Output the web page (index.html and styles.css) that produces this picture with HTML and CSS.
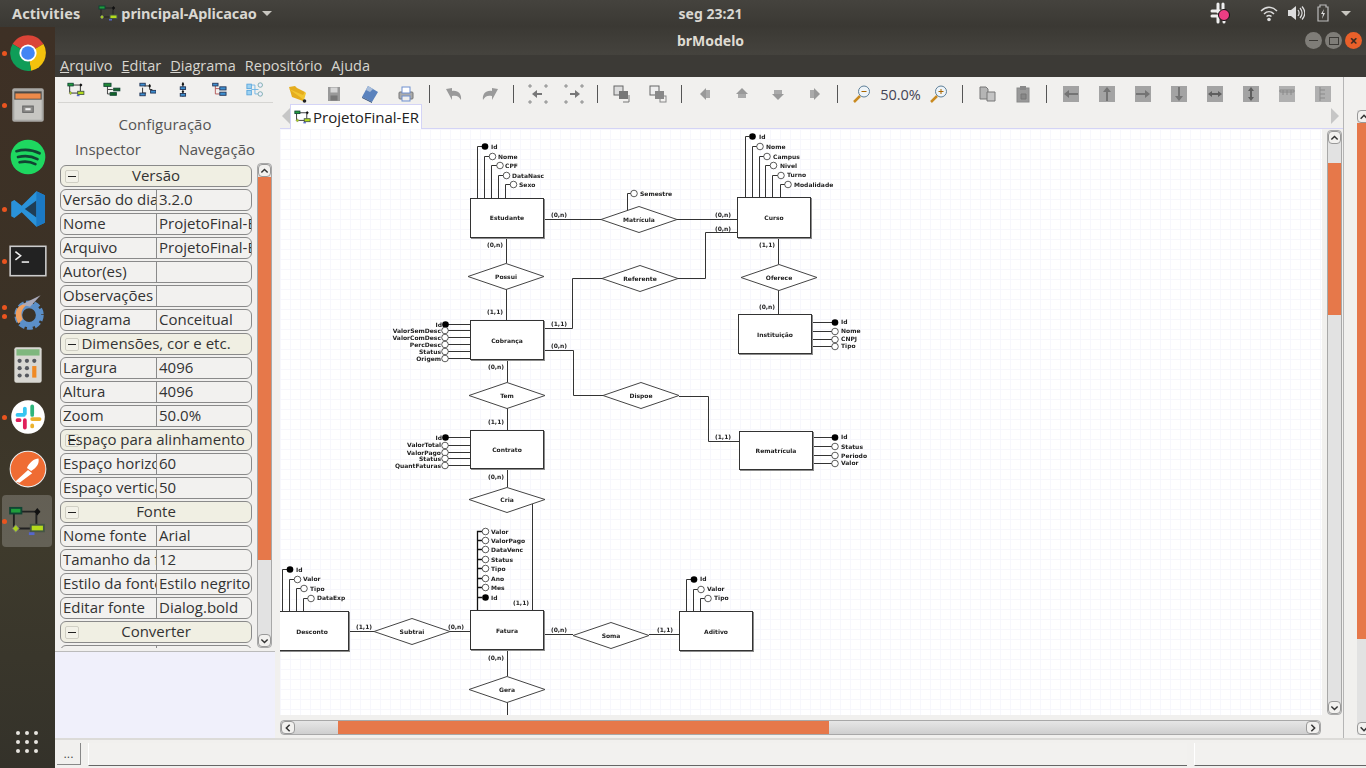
FILE: index.html
```html
<!DOCTYPE html>
<html>
<head>
	<meta charset="utf-8">
	<title>brModelo</title>
	<link rel="stylesheet" href="styles.css">
</head>
<body>
	<!-- shared icons -->
	<svg class="defs">
		<symbol id="i-er" viewBox="0 0 20 16">
			<path d="M5 3H17M3 4V12M4 12H13M15 4V10" fill="none" stroke="#222" stroke-width="1"/>
			<rect x="1" y="1" width="6" height="3" fill="#1f9e3c" stroke="#143"/>
			<path d="M15.5 1l1.600 2-1.600 2-1.600-2z" fill="#111"/>
			<rect x="12" y="10" width="7" height="3.5" fill="#b5dc1c" stroke="#454"/>
			<path d="M4 10l1.800 2-1.800 2-1.800-2z" fill="#a9d020" stroke="#777" stroke-width=".5"/>
			<rect x="11" y="14" width="3" height="1.5" fill="#5566cc"/>
		</symbol>
		<symbol id="i-tree" viewBox="0 0 20 16">
			<path d="M5 4V8H11M5 8V13H8" fill="none" stroke="#333"/>
			<rect x="1" y="1" width="8" height="3.5" fill="#1f8a35" stroke="#143"/>
			<rect x="12" y="6.5" width="7" height="3" fill="#126628" stroke="#143"/>
			<rect x="8" y="11.5" width="7" height="3" fill="#126628" stroke="#143"/>
		</symbol>
		<symbol id="i-net" viewBox="0 0 20 16">
			<path d="M6 4H12M12 2V8M4 6V12H8M12 8H15" fill="none" stroke="#222"/>
			<rect x="1" y="1" width="6" height="3" fill="#3d8fd0" stroke="#235"/>
			<rect x="13" y="9" width="6" height="3" fill="#3d8fd0" stroke="#235"/>
			<rect x="1" y="12" width="6" height="3" fill="#3d8fd0" stroke="#235"/>
			<path d="M12 2l1.5 2-1.5 2-1.5-2z" fill="#111"/>
		</symbol>
		<symbol id="i-vert" viewBox="0 0 20 16">
			<path d="M10 0V16" stroke="#222"/>
			<path d="M10 0l1.5 2-1.5 2-1.5-2z" fill="#111"/>
			<rect x="7" y="5" width="6" height="3" fill="#3d8fd0" stroke="#235"/>
			<path d="M10 9l1.5 1.5-1.5 1.5-1.5-1.5z" fill="#111"/>
			<rect x="7" y="12.5" width="6" height="3" fill="#3d8fd0" stroke="#235"/>
		</symbol>
		<symbol id="i-rel" viewBox="0 0 20 16">
			<path d="M6 4V13H11M6 7H11" fill="none" stroke="#b05050"/>
			<rect x="3" y="1" width="6" height="3" fill="#3d8fd0" stroke="#235"/>
			<rect x="11" y="5" width="7" height="3.5" fill="#3d8fd0" stroke="#235"/>
			<rect x="11" y="11" width="7" height="3.5" fill="#3d8fd0" stroke="#235"/>
		</symbol>
		<symbol id="i-map" viewBox="0 0 20 16">
			<path d="M6 3H10V13H14M6 8H14" fill="none" stroke="#6cb4e4"/>
			<rect x="1" y="2" width="5" height="5" fill="#9ed2f2" stroke="#5aa6dc"/>
			<rect x="1" y="9" width="5" height="5" fill="#9ed2f2" stroke="#5aa6dc"/>
			<circle cx="16" cy="3" r="2.5" fill="#eef" stroke="#7aa"/>
			<circle cx="16" cy="13" r="2.5" fill="#eef" stroke="#7aa"/>
		</symbol>
		<symbol id="i-open" viewBox="0 0 20 20">
			<path d="M1 3l6-1 2 2 8 4-2 9L4 13z" fill="#e5ad1e"/>
			<path d="M1 5l14 6 2-3 1 1-2 7z" fill="#f2c630"/>
			<circle cx="16.5" cy="17" r="1.800" fill="#222"/>
		</symbol>
		<symbol id="i-save" viewBox="0 0 20 20">
			<path d="M4 3H16V17H4z" fill="#999"/>
			<rect x="6.5" y="3.5" width="7" height="5" fill="#d6d6d6"/>
			<rect x="6.5" y="11.5" width="7" height="5" fill="#777"/>
		</symbol>
		<symbol id="i-saveas" viewBox="0 0 20 20">
			<path d="M8 2l10 6-6 10-10-5z" fill="#5a82bd"/>
			<path d="M8 2l5 3-3 3-4-2z" fill="#a9bedb"/>
			<path d="M2 13l10 5v1L2 14z" fill="#33507d"/>
		</symbol>
		<symbol id="i-print" viewBox="0 0 20 20">
			<rect x="3" y="8" width="14" height="7" rx="1" fill="#aaa" stroke="#777"/>
			<rect x="6" y="3" width="8" height="6" fill="#fff" stroke="#6f8fd0"/>
			<rect x="6" y="12" width="8" height="5" fill="#eee" stroke="#6f8fd0"/>
		</symbol>
		<symbol id="i-undo" viewBox="0 0 20 20">
			<path d="M2 5L8 16V12C12 11 15 12 17 16 18 10 14 6 8 7V4z" fill="#9a9a9a"/>
		</symbol>
		<symbol id="i-redo" viewBox="0 0 20 20">
			<path d="M18 5L12 16V12C8 11 5 12 3 16 2 10 6 6 12 7V4z" fill="#9a9a9a"/>
		</symbol>
		<symbol id="i-dots" viewBox="0 0 20 20">
			<path d="M1 1h2v2H1zM17 1h2v2h-2zM1 17h2v2H1zM17 17h2v2h-2z" fill="none" stroke="#777" stroke-width=".8"/>
		</symbol>
		<symbol id="i-front" viewBox="0 0 20 20">
			<rect x="2" y="2" width="9" height="9" fill="#ddd" stroke="#666"/>
			<rect x="7" y="7" width="9" height="8" fill="#777"/>
			<path d="M17 11v7h-6" fill="none" stroke="#777"/>
		</symbol>
		<symbol id="i-back" viewBox="0 0 20 20">
			<rect x="2" y="2" width="9" height="9" fill="#eee" stroke="#666"/>
			<rect x="7" y="7" width="9" height="8" fill="#888"/>
			<rect x="12" y="12" width="6" height="6" fill="none" stroke="#888"/>
		</symbol>
		<symbol id="i-left" viewBox="0 0 20 20">
			<path d="M4 10l6-6v12z" fill="#999"/><rect x="10" y="6" width="4" height="8" fill="#aaa"/>
		</symbol>
		<symbol id="i-up" viewBox="0 0 20 20">
			<path d="M10 4l6 6H4z" fill="#999"/><rect x="6" y="10" width="8" height="4" fill="#aaa"/>
		</symbol>
		<symbol id="i-down" viewBox="0 0 20 20">
			<path d="M10 16l-6-6h12z" fill="#999"/><rect x="6" y="6" width="8" height="4" fill="#aaa"/>
		</symbol>
		<symbol id="i-right" viewBox="0 0 20 20">
			<path d="M16 10l-6-6v12z" fill="#999"/><rect x="6" y="6" width="4" height="8" fill="#aaa"/>
		</symbol>
		<symbol id="i-zoomout" viewBox="0 0 20 20">
			<circle cx="12" cy="7.5" r="5.5" fill="#eef4f8" stroke="#5d7f99"/>
			<path d="M2 18l6-6" stroke="#c98a20" stroke-width="2.5"/>
			<path d="M9.5 7.5h5" stroke="#a60" stroke-width="1"/>
		</symbol>
		<symbol id="i-zoomin" viewBox="0 0 20 20">
			<circle cx="12" cy="7.5" r="5.5" fill="#eef4f8" stroke="#5d7f99"/>
			<path d="M2 18l6-6" stroke="#c98a20" stroke-width="2.5"/>
			<path d="M9.5 7.5h5M12 5v5" stroke="#a60" stroke-width="1"/>
		</symbol>
		<symbol id="i-copy" viewBox="0 0 20 20">
			<path d="M3 3H9L11 5V15H3z" fill="#b5b5b5" stroke="#777"/>
			<path d="M10 8H18V17H10z" fill="#c4c4c4" stroke="#777"/>
		</symbol>
		<symbol id="i-paste" viewBox="0 0 20 20">
			<rect x="4" y="4" width="12" height="14" fill="#999" stroke="#8a8a8a"/>
			<rect x="7" y="2" width="6" height="4" fill="#888"/>
			<path d="M8 10h5v5H8z" fill="#888" stroke="#777"/>
		</symbol>
		<symbol id="i-al1" viewBox="0 0 20 20">
			<path d="M2 2H18V18H2z" fill="#a3a3a3"/>
			<path d="M3 10l5-4v3h9v2H8v3z" fill="#747474"/>
		</symbol>
		<symbol id="i-al2" viewBox="0 0 20 20">
			<path d="M2 2H18V18H2z" fill="#a3a3a3"/>
			<path d="M10 3l4 5h-3v9H9V8H6z" fill="#747474"/>
		</symbol>
		<symbol id="i-al3" viewBox="0 0 20 20">
			<path d="M2 2H18V18H2z" fill="#a3a3a3"/>
			<path d="M17 10l-5-4v3H3v2h9v3z" fill="#747474"/>
		</symbol>
		<symbol id="i-al4" viewBox="0 0 20 20">
			<path d="M2 2H18V18H2z" fill="#a3a3a3"/>
			<path d="M10 17l4-5h-3V3H9v9H6z" fill="#747474"/>
		</symbol>
		<symbol id="i-al5" viewBox="0 0 20 20">
			<path d="M2 2H18V18H2z" fill="#a3a3a3"/>
			<path d="M3 10l4-3v2h6V7l4 3-4 3v-2H7v2z" fill="#5e5e5e"/>
		</symbol>
		<symbol id="i-al6" viewBox="0 0 20 20">
			<path d="M2 2H18V18H2z" fill="#a3a3a3"/>
			<path d="M10 3l3 4h-2v6h2l-3 4-3-4h2V7H7z" fill="#5e5e5e"/>
		</symbol>
		<symbol id="i-al7" viewBox="0 0 20 20">
			<path d="M2 2H18V18H2z" fill="#b0b0b0"/>
			<path d="M3 6h14v2H3zM6 6v5M10 6v5M14 6v5" fill="none" stroke="#8a8a8a"/>
		</symbol>
		<symbol id="i-al8" viewBox="0 0 20 20">
			<path d="M2 2H18V18H2z" fill="#b0b0b0"/>
			<path d="M7 3v14M7 6h5M7 10h5M7 14h5" fill="none" stroke="#8a8a8a"/>
		</symbol>
		<symbol id="i-chev-up" viewBox="0 0 14 12"><path d="M3 8l4-4 4 4" fill="none" stroke="#333" stroke-width="1.800"/></symbol>
		<symbol id="i-chev-down" viewBox="0 0 14 12"><path d="M3 4l4 4 4-4" fill="none" stroke="#333" stroke-width="1.800"/></symbol>
		<symbol id="i-chev-left" viewBox="0 0 14 12"><path d="M9 2L5 6l4 4" fill="none" stroke="#333" stroke-width="1.800"/></symbol>
		<symbol id="i-chev-right" viewBox="0 0 14 12"><path d="M5 2l4 4-4 4" fill="none" stroke="#333" stroke-width="1.800"/></symbol>
	</svg>

	<header class="topbar">
		<span class="activities">Activities</span>
		<span class="app-menu">
			<svg class="app-icon"><use href="#i-er"/></svg>
			principal-Aplicacao
			<span class="caret"></span>
		</span>
		<span class="clock">seg 23:21</span>
		<span class="tray">
			<svg class="tray-slack" viewBox="0 0 22 22">
				<path d="M8 2v8M13 2v6M2 9h8M2 14h7M8 14v6M14 16v4" stroke="#eee" stroke-width="3" stroke-linecap="round"/>
				<circle cx="14" cy="13" r="5.5" fill="#ec3d83" stroke="#111" stroke-width="1"/>
			</svg>
			<svg class="tray-icon" viewBox="0 0 18 18">
				<path d="M1 7c5-5 11-5 16 0M4 10c3-3 7-3 10 0M6.5 12.5c1.5-1.300 3.5-1.300 5 0" fill="none" stroke="#ddd" stroke-width="1.5"/>
				<circle cx="9" cy="15.5" r="1.800" fill="#ddd"/>
			</svg>
			<svg class="tray-icon" viewBox="0 0 18 18">
				<path d="M1 6h3l5-4v14l-5-4H1z" fill="#ddd"/>
				<path d="M11 6c1.5 2 1.5 4 0 6M13 4c2.5 3 2.5 7 0 10M15 2.5c3.5 4 3.5 9 0 13" fill="none" stroke="#ddd" stroke-width="1.200"/>
			</svg>
			<svg class="tray-icon" viewBox="0 0 18 18">
				<path d="M6 1h6v2h2v14H4V3h2z" fill="none" stroke="#bbb" stroke-width="1.200"/>
				<path d="M10 5l-3 5h2l-1 5 3-6H9z" fill="#ddd"/>
			</svg>
			<span class="caret tray-caret"></span>
		</span>
	</header>

	<div class="desktop">
		<nav class="dock">
			<div class="dock-item"><i class="run"></i>
				<svg viewBox="0 0 40 40">
					<path d="M20 20L5.300 11.5A17 17 0 0 1 34.700 11.5z" fill="#db4437"/>
					<path d="M20 20L34.700 11.5A17 17 0 0 1 23 36.800z" fill="#f4c20d"/>
					<path d="M20 20L23 36.800A17 17 0 0 1 5.300 11.5z" fill="#0f9d58"/>
					<circle cx="20" cy="20" r="8.200" fill="#fff"/>
					<circle cx="20" cy="20" r="6.5" fill="#4285f4"/>
				</svg>
			</div>
			<div class="dock-item"><i class="run"></i>
				<svg viewBox="0 0 40 40">
					<rect x="5" y="4" width="30" height="32" rx="2" fill="#a9a8a5"/>
					<rect x="7" y="7" width="26" height="8" fill="#4d4a47"/>
					<rect x="8" y="9" width="24" height="5" fill="#ee8a4a"/>
					<rect x="7" y="15" width="26" height="19" fill="#c7c6c2"/>
					<rect x="15" y="21" width="10" height="6" fill="#8e8d8a" stroke="#666"/>
					<rect x="17.5" y="23" width="5" height="2" fill="#eee"/>
				</svg>
			</div>
			<div class="dock-item">
				<svg viewBox="0 0 40 40">
					<circle cx="20" cy="20" r="16.5" fill="#1ed760"/>
					<path d="M9 14.5c7-2 15-1.5 22 2M10.5 20c6-1.5 13-1 18.5 2M12 25c5-1 10-.8 15 1.800" fill="none" stroke="#143" stroke-width="2.600" stroke-linecap="round"/>
				</svg>
			</div>
			<div class="dock-item"><i class="run"></i>
				<svg viewBox="0 0 40 40">
					<path d="M28 3l8 4v26l-8 4-14-14-7 5.5-3-1.5V13l3-1.5 7 5.5z" fill="#2a92d9"/>
					<path d="M28 12L17 20l11 8z" fill="#1f3d55"/>
					<path d="M28 3l8 4v26l-8 4z" fill="#1b79c4"/>
				</svg>
			</div>
			<div class="dock-item"><i class="run"></i>
				<svg viewBox="0 0 40 40">
					<rect x="3" y="6" width="34" height="28" fill="#222" stroke="#ccc" stroke-width="1.5"/>
					<path d="M8 11l5 4-5 4" fill="none" stroke="#eee" stroke-width="1.5"/>
					<path d="M14 21h7" stroke="#eee" stroke-width="1.5"/>
				</svg>
			</div>
			<div class="dock-item"><i class="run run-a"></i><i class="run run-b"></i>
				<svg viewBox="0 0 40 40">
					<circle cx="21" cy="22" r="11" fill="none" stroke="#5b8fc8" stroke-width="6" stroke-dasharray="5 2"/>
					<circle cx="21" cy="22" r="9" fill="none" stroke="#5b8fc8" stroke-width="5"/>
					<path d="M11 30C5 20 10 10 20 12c-5 2-8 8-5 14z" fill="#f0a060"/>
					<path d="M14 12L32 3 22 14z" fill="#aab"/>
				</svg>
			</div>
			<div class="dock-item">
				<svg viewBox="0 0 40 40">
					<rect x="7" y="3" width="26" height="34" rx="2" fill="#d8d7d2"/>
					<rect x="9" y="5" width="22" height="6" fill="#7fb77e"/>
					<g fill="#55585e">
						<rect x="10" y="14" width="4" height="4" rx="2"/><rect x="17" y="14" width="4" height="4" rx="2"/><rect x="24" y="14" width="4" height="4" rx="2"/>
						<rect x="10" y="21" width="4" height="4" rx="2"/><rect x="17" y="21" width="4" height="4" rx="2"/>
						<rect x="10" y="28" width="4" height="4" rx="2"/><rect x="17" y="28" width="4" height="4" rx="2"/>
					</g>
					<rect x="24" y="21" width="4" height="11" fill="#f08a24"/>
				</svg>
			</div>
			<div class="dock-item"><i class="run"></i>
				<svg viewBox="0 0 40 40">
					<circle cx="20" cy="20" r="16" fill="#fff"/>
					<g stroke-width="3.600" stroke-linecap="round">
						<path d="M17 12v5M10 18h6" stroke="#36c5f0" fill="none"/>
						<path d="M24 10v7M24 18h0" stroke="#2eb67d" fill="none"/>
						<path d="M24 22h7M24 28v1" stroke="#ecb22e" fill="none"/>
						<path d="M17 23v7M10 23h2" stroke="#e01e5a" fill="none"/>
					</g>
				</svg>
			</div>
			<div class="dock-item">
				<svg viewBox="0 0 40 40">
					<circle cx="20" cy="20" r="17" fill="#ef6c33" stroke="#eee" stroke-width="1"/>
					<path d="M8 32l12-11 4 3-12 9zM19 19c2-5 7-9 11-9 1 5-2 9-7 12z" fill="#fff"/>
				</svg>
			</div>
			<div class="dock-item dock-active"><i class="run"></i>
				<svg class="dock-er"><use href="#i-er"/></svg>
			</div>
			<div class="dock-apps">
				<span></span><span></span><span></span><span></span><span></span><span></span><span></span><span></span><span></span>
			</div>
		</nav>

		<div class="window">
			<div class="titlebar">
				<span>brModelo</span>
				<div class="win-btns">
					<span class="win-btn"><b class="w-min"></b></span>
					<span class="win-btn"><b class="w-max"></b></span>
					<span class="win-btn win-close">×</span>
				</div>
			</div>
			<div class="menubar">
				<span><u>A</u>rquivo</span>
				<span><u>E</u>ditar</span>
				<span><u>D</u>iagrama</span>
				<span>Repositório</span>
				<span>Ajuda</span>
			</div>

			<div class="content">
				<aside class="side">
					<div class="side-tools">
						<svg><use href="#i-er"/></svg>
						<svg><use href="#i-tree"/></svg>
						<svg><use href="#i-net"/></svg>
						<svg><use href="#i-vert"/></svg>
						<svg><use href="#i-rel"/></svg>
						<svg><use href="#i-map"/></svg>
					</div>
					<div class="side-title">Configuração</div>
					<div class="side-tabs"><span>Inspector</span><span>Navegação</span></div>
					<div class="inspector">
						<div class="props">
							<div class="row head"><i class="minus"></i>Versão</div>
							<div class="row"><span class="key">Versão do diagrama</span><span class="val">3.2.0</span></div>
							<div class="row"><span class="key">Nome</span><span class="val">ProjetoFinal-ER</span></div>
							<div class="row"><span class="key">Arquivo</span><span class="val">ProjetoFinal-ER</span></div>
							<div class="row"><span class="key">Autor(es)</span><span class="val"></span></div>
							<div class="row"><span class="key">Observações</span><span class="val"></span></div>
							<div class="row"><span class="key">Diagrama</span><span class="val">Conceitual</span></div>
							<div class="row head"><i class="minus"></i>Dimensões, cor e etc.</div>
							<div class="row"><span class="key">Largura</span><span class="val">4096</span></div>
							<div class="row"><span class="key">Altura</span><span class="val">4096</span></div>
							<div class="row"><span class="key">Zoom</span><span class="val">50.0%</span></div>
							<div class="row head"><i class="minus"></i>Espaço para alinhamento</div>
							<div class="row"><span class="key">Espaço horizontal</span><span class="val">60</span></div>
							<div class="row"><span class="key">Espaço vertical</span><span class="val">50</span></div>
							<div class="row head"><i class="minus"></i>Fonte</div>
							<div class="row"><span class="key">Nome fonte</span><span class="val">Arial</span></div>
							<div class="row"><span class="key">Tamanho da fonte</span><span class="val">12</span></div>
							<div class="row"><span class="key">Estilo da fonte</span><span class="val">Estilo negrito</span></div>
							<div class="row"><span class="key">Editar fonte</span><span class="val">Dialog.bold</span></div>
							<div class="row head"><i class="minus"></i>Converter</div>
							<div class="row"><span class="key"></span><span class="val"></span></div>
						</div>
						<div class="vscroll side-scroll">
							<span class="sbtn"><svg><use href="#i-chev-up"/></svg></span>
							<div class="thumb"></div>
							<div class="track"></div>
							<span class="sbtn"><svg><use href="#i-chev-down"/></svg></span>
						</div>
					</div>
					<div class="side-empty"></div>
				</aside>

				<div class="splitter"></div>

				<main class="center">
					<div class="toolbar">
						<svg><use href="#i-open"/></svg>
						<svg><use href="#i-save"/></svg>
						<svg><use href="#i-saveas"/></svg>
						<svg><use href="#i-print"/></svg>
						<i class="sep"></i>
						<svg><use href="#i-undo"/></svg>
						<svg><use href="#i-redo"/></svg>
						<i class="sep"></i>
						<svg viewBox="0 0 20 20"><use href="#i-dots"/><path d="M4 10l5-4v3h5v2H9v3z" fill="#777"/></svg>
						<svg viewBox="0 0 20 20"><use href="#i-dots"/><path d="M16 10l-5-4v3H6v2h5v3z" fill="#777"/></svg>
						<i class="sep"></i>
						<svg><use href="#i-front"/></svg>
						<svg><use href="#i-back"/></svg>
						<i class="sep"></i>
						<svg><use href="#i-left"/></svg>
						<svg><use href="#i-up"/></svg>
						<svg><use href="#i-down"/></svg>
						<svg><use href="#i-right"/></svg>
						<i class="sep"></i>
						<svg><use href="#i-zoomout"/></svg>
						<span class="zoom-val">50.0%</span>
						<svg><use href="#i-zoomin"/></svg>
						<i class="sep"></i>
						<svg><use href="#i-copy"/></svg>
						<svg><use href="#i-paste"/></svg>
						<i class="sep"></i>
						<svg><use href="#i-al1"/></svg>
						<svg><use href="#i-al2"/></svg>
						<svg><use href="#i-al3"/></svg>
						<svg><use href="#i-al4"/></svg>
						<svg><use href="#i-al5"/></svg>
						<svg><use href="#i-al6"/></svg>
						<svg><use href="#i-al7"/></svg>
						<svg><use href="#i-al8"/></svg>
					</div>
					<div class="tabbar">
						<i class="tri tri-left"></i>
						<div class="tab"><svg><use href="#i-er"/></svg>ProjetoFinal-ER</div>
						<i class="tri tri-right"></i>
					</div>
					<div class="view">
						<div class="canvas">
							<svg class="diagram" viewBox="280 129 1042 586" width="1042" height="586">
								<!-- connections -->
								<path class="ln" d="M544.5 219.5H601M677 219.5H737M627.5 212V193.5H631"/>
								<path class="ln" d="M506.5 238V263M506.5 289V320M544 328.5H572.5V278.5H602M678 278.5H705.5V232.5H737"/>
								<path class="ln" d="M778.5 238V264M778.5 290V314M544 350.5H573.5V395.5H603M679 396.5H708.5V441.5H739"/>
								<path class="ln" d="M507.5 360V382M507.5 408V430M507.5 469V487M532.5 504V610M507.5 650V676M507.5 702V715"/>
								<path class="ln" d="M349 631.5H374M450 631.5H470M544 634.5H573M649 634.5H679"/>
								<!-- attribute lines -->
								<path class="ln" d="M477.5 198V146.5H482M484.5 198V156.5H490M491.5 198V165.5H497M498.5 198V175.5H504M505.5 198V184.5H511"/>
								<path class="ln" d="M745.5 197V136.5H749M752.5 197V146.5H757M759.5 197V156.5H764M765.5 197V165.5H770M772.5 197V175.5H778M780.5 197V184.5H785"/>
								<path class="ln" d="M448 324.5H470M448 330.5H470M448 337.5H470M448 344.5H470M448 351.5H470M448 358.5H470"/>
								<path class="ln" d="M448 437.5H470M448 445.5H470M448 452.5H470M448 458.5H470M448 465.5H470"/>
								<path class="ln" d="M812 322.5H832M812 331.5H832M812 339.5H832M812 346.5H832"/>
								<path class="ln" d="M813 437.5H832M813 446.5H832M813 455.5H832M813 463.5H832"/>
								<path class="ln ln-thick" d="M477.5 610V531.5H482M477.5 540.5H482M477.5 549.5H482M477.5 559.5H482M477.5 568.5H482M477.5 578.5H482M477.5 587.5H482M477.5 597.5H482"/>
								<path class="ln" d="M282.5 611V569.5H287M289.5 611V579.5H294M296.5 611V588.5H301M303.5 611V598.5H308"/>
								<path class="ln" d="M686.5 611V579.5H691M693.5 611V589.5H698M700.5 611V598.5H705"/>

								<!-- entities -->
								<rect class="ent" x="470.5" y="198.5" width="73" height="39"/>
								<rect class="ent" x="737.5" y="197.5" width="73" height="40"/>
								<rect class="ent" x="470.5" y="320.5" width="73" height="39"/>
								<rect class="ent" x="738.5" y="314.5" width="73" height="39"/>
								<rect class="ent" x="470.5" y="430.5" width="73" height="38"/>
								<rect class="ent" x="739.5" y="431.5" width="73" height="38"/>
								<rect class="ent" x="260.5" y="611.5" width="88" height="39"/>
								<rect class="ent" x="470.5" y="610.5" width="73" height="39"/>
								<rect class="ent" x="679.5" y="611.5" width="73" height="39"/>

								<!-- relationships -->
								<path class="rel" d="M601 219.5L639 206.5 677 219.5 639 232.5z"/>
								<path class="rel" d="M468 276.5L506 263.5 544 276.5 506 289.5z"/>
								<path class="rel" d="M602 278.5L640 265.5 678 278.5 640 291.5z"/>
								<path class="rel" d="M741 277.5L779 264.5 817 277.5 779 290.5z"/>
								<path class="rel" d="M469 395.5L507 382.5 545 395.5 507 408.5z"/>
								<path class="rel" d="M603 395.5L641 382.5 679 395.5 641 408.5z"/>
								<path class="rel" d="M469 499.5L507 487.5 545 499.5 507 512.5z"/>
								<path class="rel" d="M374 631.5L412 618.5 450 631.5 412 644.5z"/>
								<path class="rel" d="M573 635.5L611 622.5 649 635.5 611 648.5z"/>
								<path class="rel" d="M469 689.5L507 676.5 545 689.5 507 702.5z"/>

								<!-- attribute circles -->
								<g class="key-dot">
									<circle cx="485" cy="146.5" r="3.300"/><circle cx="752.5" cy="136.5" r="3.300"/>
									<circle cx="445.5" cy="324.5" r="3.300"/><circle cx="445.5" cy="437.5" r="3.300"/>
									<circle cx="835" cy="322.5" r="3.300"/><circle cx="835" cy="437.5" r="3.300"/>
									<circle cx="485.5" cy="597.5" r="3.300"/><circle cx="290" cy="569.5" r="3.300"/>
									<circle cx="694" cy="579.5" r="3.300"/>
								</g>
								<g class="attr-dot">
									<circle cx="492.5" cy="156.5" r="3.300"/><circle cx="500" cy="165.5" r="3.300"/><circle cx="506.5" cy="175.5" r="3.300"/><circle cx="513.5" cy="184.5" r="3.300"/>
									<circle cx="634" cy="193.5" r="3.300"/>
									<circle cx="760" cy="146.5" r="3.300"/><circle cx="767" cy="156.5" r="3.300"/><circle cx="773.5" cy="165.5" r="3.300"/><circle cx="781" cy="175.5" r="3.300"/><circle cx="788" cy="184.5" r="3.300"/>
									<circle cx="445" cy="330.5" r="3.300"/><circle cx="445" cy="337.5" r="3.300"/><circle cx="445" cy="344.5" r="3.300"/><circle cx="445" cy="351.5" r="3.300"/><circle cx="445" cy="358.5" r="3.300"/>
									<circle cx="445" cy="445.5" r="3.300"/><circle cx="445" cy="452.5" r="3.300"/><circle cx="445" cy="458.5" r="3.300"/><circle cx="445" cy="465.5" r="3.300"/>
									<circle cx="835" cy="331.5" r="3.300"/><circle cx="835" cy="339.5" r="3.300"/><circle cx="835" cy="346.5" r="3.300"/>
									<circle cx="835" cy="446.5" r="3.300"/><circle cx="835" cy="455.5" r="3.300"/><circle cx="835" cy="463.5" r="3.300"/>
									<circle cx="485.5" cy="531.5" r="3.300"/><circle cx="485.5" cy="540.5" r="3.300"/><circle cx="485.5" cy="549.5" r="3.300"/><circle cx="485.5" cy="559.5" r="3.300"/><circle cx="485.5" cy="568.5" r="3.300"/><circle cx="485.5" cy="578.5" r="3.300"/><circle cx="485.5" cy="587.5" r="3.300"/>
									<circle cx="297.5" cy="579.5" r="3.300"/><circle cx="304" cy="588.5" r="3.300"/><circle cx="311" cy="598.5" r="3.300"/>
									<circle cx="701" cy="589.5" r="3.300"/><circle cx="708" cy="598.5" r="3.300"/>
								</g>

								<!-- names in the middle of shapes -->
								<g class="txt mid">
									<text x="507" y="220">Estudante</text>
									<text x="774" y="219.5">Curso</text>
									<text x="507" y="343">Cobrança</text>
									<text x="775" y="337">Instituição</text>
									<text x="507" y="452">Contrato</text>
									<text x="776" y="453">Rematrícula</text>
									<text x="312" y="634">Desconto</text>
									<text x="507" y="633">Fatura</text>
									<text x="716" y="634">Aditivo</text>
									<text x="639" y="221.5">Matrícula</text>
									<text x="506" y="279">Possui</text>
									<text x="640" y="281">Referente</text>
									<text x="779" y="280">Oferece</text>
									<text x="507" y="398">Tem</text>
									<text x="641" y="398">Dispoe</text>
									<text x="507" y="502">Cria</text>
									<text x="412" y="634">Subtrai</text>
									<text x="611" y="638">Soma</text>
									<text x="507" y="692">Gera</text>
									<text x="559" y="217">(0,n)</text>
									<text x="723" y="217">(0,n)</text>
									<text x="723" y="231">(0,n)</text>
									<text x="495" y="247">(0,n)</text>
									<text x="495" y="314">(1,1)</text>
									<text x="559" y="326">(1,1)</text>
									<text x="559" y="348">(0,n)</text>
									<text x="767" y="247">(1,1)</text>
									<text x="767" y="309">(0,n)</text>
									<text x="496" y="369">(0,n)</text>
									<text x="496" y="424">(1,1)</text>
									<text x="723" y="439">(1,1)</text>
									<text x="496" y="479">(0,n)</text>
									<text x="521" y="605">(1,1)</text>
									<text x="364" y="629">(1,1)</text>
									<text x="456" y="629">(0,n)</text>
									<text x="559" y="632">(0,n)</text>
									<text x="665" y="632">(1,1)</text>
									<text x="496" y="660">(0,n)</text>
								</g>

								<!-- attribute names, left side -->
								<g class="txt end">
									<text x="442" y="326.5">Id</text>
									<text x="441" y="333">ValorSemDesc</text>
									<text x="441" y="340">ValorComDesc</text>
									<text x="441" y="347">PercDesc</text>
									<text x="441" y="354">Status</text>
									<text x="441" y="361">Origem</text>
									<text x="442" y="439.5">Id</text>
									<text x="441" y="447">ValorTotal</text>
									<text x="441" y="455">ValorPago</text>
									<text x="441" y="461">Status</text>
									<text x="441" y="468">QuantFaturas</text>
								</g>

								<!-- attribute names, right side -->
								<g class="txt">
									<text x="491" y="148.5">Id</text><text x="498" y="158.5">Nome</text><text x="505" y="167.5">CPF</text><text x="512" y="177.5">DataNasc</text><text x="519" y="186.5">Sexo</text>
									<text x="640" y="196">Semestre</text>
									<text x="759" y="138.5">Id</text><text x="766" y="148.5">Nome</text><text x="773" y="158.5">Campus</text><text x="780" y="167.5">Nivel</text><text x="787" y="177">Turno</text><text x="794" y="186.5">Modalidade</text>
									<text x="841" y="324">Id</text><text x="841" y="333">Nome</text><text x="841" y="341">CNPJ</text><text x="841" y="348">Tipo</text>
									<text x="841" y="439">Id</text><text x="841" y="448.5">Status</text><text x="841" y="457.5">Periodo</text><text x="841" y="465">Valor</text>
									<text x="491" y="534">Valor</text><text x="491" y="543">ValorPago</text><text x="491" y="552">DataVenc</text><text x="491" y="562">Status</text><text x="491" y="571">Tipo</text><text x="491" y="581">Ano</text><text x="491" y="590">Mes</text><text x="491" y="600">Id</text>
									<text x="296" y="572">Id</text><text x="303" y="581">Valor</text><text x="310" y="591">Tipo</text><text x="317" y="600">DataExp</text>
									<text x="700" y="581">Id</text><text x="707" y="591">Valor</text><text x="714" y="600">Tipo</text>
								</g>
							</svg>
						</div>
						<div class="vscroll view-scroll">
							<span class="sbtn"><svg><use href="#i-chev-up"/></svg></span>
							<div class="track track-top"></div>
							<div class="thumb thumb-v"></div>
							<div class="track"></div>
							<span class="sbtn"><svg><use href="#i-chev-down"/></svg></span>
						</div>
					</div>
					<div class="hscroll">
						<span class="sbtn"><svg><use href="#i-chev-left"/></svg></span>
						<div class="htrack track-left"></div>
						<div class="thumb thumb-h"></div>
						<div class="htrack"></div>
						<span class="sbtn"><svg><use href="#i-chev-right"/></svg></span>
					</div>
				</main>

				<aside class="right">
					<div class="right-rows">
						<i></i><i></i><i></i><i></i><i></i><i></i><i></i><i></i><i></i><i></i><i></i><i></i><i></i><i></i>
					</div>
					<div class="right-scroll">
						<span class="sbtn"><svg><use href="#i-chev-up"/></svg></span>
						<div class="thumb"></div>
						<div class="track"></div>
						<span class="sbtn"><svg><use href="#i-chev-down"/></svg></span>
					</div>
				</aside>
			</div>

			<footer class="status">
				<button class="more">...</button>
				<div class="field field-main"></div>
				<div class="field field-end"></div>
			</footer>
		</div>
	</div>
</body>
</html>
```

FILE: styles.css
```css
/* General Reset */
* {
	box-sizing: border-box;
	margin: 0;
	padding: 0;
}

body {
	width: 1366px;
	height: 768px;
	overflow: hidden;
	display: flex;
	flex-direction: column;
	font-family: "Open Sans", "Noto Sans", sans-serif;
	background: #2c2a26;
}

.defs {
	display: none;
}

/* Top Bar */
.topbar {
	height: 27px;
	flex: none;
	display: flex;
	align-items: center;
	position: relative;
	padding-bottom: 1px;
	background: linear-gradient(#45433e, #3a3833);
	color: #d9d7d1;
	font-family: "Noto Sans", sans-serif;
	font-size: 14px;
	font-weight: 700;
}

.activities {
	margin-left: 12px;
	font-size: 14.5px;
	letter-spacing: 0.1px;
}

.app-menu {
	margin-left: 18px;
	display: flex;
	align-items: center;
	font-size: 14.5px;
	letter-spacing: -0.1px;
}

.app-icon {
	width: 20px;
	height: 16px;
	margin-right: 3px;
}

.caret {
	width: 0;
	height: 0;
	margin-left: 5px;
	border-left: 5px solid transparent;
	border-right: 5px solid transparent;
	border-top: 5px solid #c8c6c0;
}

.clock {
	position: absolute;
	left: 55px;
	right: 0;
	text-align: center;
	pointer-events: none;
}

.tray {
	margin-left: auto;
	display: flex;
	align-items: center;
}

.tray-slack {
	width: 22px;
	height: 22px;
	margin-right: 28px;
}

.tray-icon {
	width: 18px;
	height: 18px;
	margin-right: 9px;
}

.tray-caret {
	margin: 0 15px 0 0;
}

.desktop {
	flex: 1;
	display: flex;
	min-height: 0;
}

/* Dock */
.dock {
	width: 55px;
	flex: none;
	display: flex;
	flex-direction: column;
	background: linear-gradient(#3e3025, #3b3226 40%, #3e3a2c 70%, #34322a);
}

.dock-item {
	height: 52px;
	flex: none;
	position: relative;
	display: flex;
	align-items: center;
	justify-content: center;
}

.dock-item svg {
	width: 42px;
	height: 42px;
}

.dock-active {
	margin: 0 3px 0 2px;
	border-radius: 4px;
	background: rgba(255, 255, 255, 0.2);
}

.dock-item .dock-er {
	width: 38px;
	height: 30px;
}

.run {
	position: absolute;
	left: 2px;
	top: 24px;
	width: 5px;
	height: 5px;
	border-radius: 50%;
	background: #e9541f;
}

.dock-active .run {
	left: 0;
}

.run-a {
	top: 18px;
}

.run-b {
	top: 27px;
}

.dock-apps {
	margin: auto 0 15px 16px;
	width: 24px;
	display: grid;
	grid-template-columns: repeat(3, 4px);
	gap: 5px;
}

.dock-apps span {
	height: 4px;
	border-radius: 50%;
	background: #e8e6e0;
}

/* Window */
.window {
	flex: 1;
	min-width: 0;
	display: flex;
	flex-direction: column;
	background: #f1f0ee;
}

.titlebar {
	height: 28px;
	flex: none;
	position: relative;
	display: flex;
	align-items: center;
	justify-content: center;
	padding-bottom: 2px;
	background: linear-gradient(#3b3934, #45433e);
	color: #dfdbd2;
	font-family: "Noto Sans", sans-serif;
	font-size: 14px;
	font-weight: 700;
}

.win-btns {
	position: absolute;
	right: 4px;
	top: 5px;
	display: flex;
	gap: 3px;
}

.win-btn {
	width: 17px;
	height: 17px;
	border-radius: 50%;
	background: #7f7d78;
	display: flex;
	align-items: center;
	justify-content: center;
}

.w-min {
	width: 9px;
	border-top: 1px solid #3c3a36;
}

.w-max {
	width: 10px;
	height: 8px;
	border: 1px solid #3c3a36;
}

.win-close {
	background: #e9602a;
	color: #3c2a20;
	font-size: 14px;
	line-height: 1;
}

.menubar {
	height: 22px;
	flex: none;
	display: flex;
	align-items: center;
	gap: 9px;
	padding: 0 0 2px 5px;
	background: #3c3a36;
	color: #d8d6d0;
	font-size: 14.5px;
}

/* Left Panel */
.content {
	flex: 1;
	min-height: 0;
	display: flex;
}

.side {
	width: 220px;
	flex: none;
	display: flex;
	flex-direction: column;
}

.side-tools {
	height: 26px;
	margin: 0 2px 0 3px;
	flex: none;
	display: flex;
	align-items: center;
	border-bottom: 1px solid #d6d5d2;
}

.side-tools svg {
	width: 18px;
	height: 15px;
	margin: 0 9px;
}

.side-title {
	height: 38px;
	flex: none;
	padding-top: 11px;
	text-align: center;
	font-size: 15px;
	color: #555;
}

.side-tabs {
	height: 24px;
	flex: none;
	padding: 0 20px;
	display: flex;
	justify-content: space-between;
	font-size: 15px;
	line-height: 17px;
	color: #555;
}

.inspector {
	height: 487px;
	flex: none;
	padding: 0 3px 0 5px;
	display: flex;
	align-items: flex-start;
	gap: 5px;
	border-bottom: 1px solid #bbb;
}

.props {
	width: 192px;
	height: 483px;
	flex: none;
	overflow: hidden;
	display: flex;
	flex-direction: column;
	gap: 2px;
}

.row {
	height: 22px;
	flex: none;
	position: relative;
	z-index: 0;
	display: flex;
	border: 1px solid #8a8a8a;
	border-radius: 6px;
	font-size: 15px;
	line-height: 18px;
	color: #333;
	background: #f2f1ef;
}

.key {
	width: 96px;
	flex: none;
	padding-left: 2px;
	overflow: hidden;
	white-space: nowrap;
	border-right: 1px solid #8a8a8a;
}

.val {
	flex: 1;
	min-width: 0;
	padding-left: 2px;
	overflow: hidden;
	white-space: nowrap;
}

.head {
	justify-content: center;
	white-space: nowrap;
	background: #f0efe3;
}

.minus {
	position: absolute;
	z-index: -1;
	left: 4px;
	top: 4px;
	width: 14px;
	height: 13px;
	border: 1px solid #d0cfc4;
	border-radius: 2px;
	background: #f2f1e8;
}

.minus::after {
	content: "";
	position: absolute;
	left: 2px;
	right: 2px;
	top: 5px;
	border-top: 1px solid #222;
}

.side-empty {
	flex: 1;
	background: #f0f0fb;
}

.splitter {
	width: 5px;
	flex: none;
}

/* Scrollbars */
.vscroll {
	width: 15px;
	flex: none;
	display: flex;
	flex-direction: column;
	border: 1px solid #a8a8a8;
	border-radius: 4px;
	background: #e2e2e2;
}

.side-scroll {
	height: 485px;
	margin-top: -2px;
}

.sbtn {
	height: 13px;
	flex: none;
	display: flex;
	align-items: center;
	justify-content: center;
	border: 1px solid #999;
	border-radius: 4px;
	background: #f2f1ef;
}

.sbtn svg {
	width: 12px;
	height: 10px;
}

.thumb {
	background: #e6784a;
}

.side-scroll .thumb {
	height: 383px;
}

.track {
	flex: 1;
}

.view {
	flex: 1;
	min-height: 0;
	display: flex;
	gap: 5px;
}

.view-scroll {
	margin-top: 1px;
}

.track-top {
	flex: none;
	height: 19px;
}

.thumb-v {
	height: 152px;
}

.hscroll {
	height: 15px;
	margin: 5px 22px 3px 0;
	flex: none;
	display: flex;
	border: 1px solid #a8a8a8;
	border-radius: 4px;
	background: linear-gradient(#e6e6e6, #cfcfcf);
}

.hscroll .sbtn {
	width: 14px;
	height: 13px;
}

.htrack {
	flex: 1;
}

.track-left {
	flex: none;
	width: 43px;
}

.thumb-h {
	width: 491px;
}

/* Center */
.center {
	width: 1064px;
	flex: none;
	display: flex;
	flex-direction: column;
	border-right: 1px solid #b5b5b5;
}

.toolbar {
	height: 27px;
	flex: none;
	display: flex;
	align-items: center;
	padding-top: 7px;
}

.toolbar svg {
	width: 20px;
	height: 20px;
	margin: 0 8px;
}

.sep {
	width: 12px;
	height: 18px;
	flex: none;
	background: linear-gradient(#555, #555) 5px 0 / 1px 100% no-repeat;
}

.zoom-val {
	width: 41px;
	font-size: 14.5px;
	color: #445;
	text-align: center;
}

.tabbar {
	height: 25px;
	flex: none;
	display: flex;
	align-items: flex-start;
	justify-content: space-between;
	padding: 0 4px 0 2px;
	position: relative;
	border-bottom: 1px solid #d4d4f6;
}

.tri {
	width: 0;
	height: 0;
	margin-top: 4px;
	border-top: 8px solid transparent;
	border-bottom: 8px solid transparent;
}

.tri-left {
	border-right: 8px solid #c6c6c6;
}

.tri-right {
	border-left: 8px solid #c6c6c6;
}

.tab {
	width: 132px;
	height: 25px;
	margin-right: auto;
	display: flex;
	align-items: center;
	gap: 2px;
	padding: 0 0 1px 3px;
	background: #fff;
	border: 1px solid #d4d4f6;
	border-bottom: none;
	font-size: 15px;
	color: #222;
}

.tab svg {
	width: 17px;
	height: 14px;
}

/* Diagram */
.canvas {
	width: 1042px;
	flex: none;
	overflow: hidden;
	background-color: #fff;
	background-image:
		linear-gradient(#f7f7fc 1px, transparent 1px),
		linear-gradient(90deg, #f7f7fc 1px, transparent 1px);
	background-size: 10px 10px;
}

.diagram {
	display: block;
	filter: blur(0.4px);
}

.ln {
	fill: none;
	stroke: #333;
	stroke-width: 1;
}

.ln-thick {
	stroke: #111;
	stroke-width: 1.3;
}

.ent {
	fill: #fff;
	stroke: #333;
	stroke-width: 1;
	filter: drop-shadow(1px 1px 0 #8c8c8c);
}

.rel {
	fill: #fff;
	stroke: #444;
	stroke-width: 1;
}

.key-dot circle {
	fill: #000;
}

.attr-dot circle {
	fill: #fff;
	stroke: #333;
	stroke-width: 0.8;
}

.txt text {
	font-family: "DejaVu Sans", sans-serif;
	font-size: 6px;
	font-weight: 700;
	fill: #222;
}

.mid text {
	text-anchor: middle;
}

.end text {
	text-anchor: end;
}

/* Right Panel */
.right {
	flex: 1;
	min-width: 0;
	display: flex;
	padding-top: 33px;
	padding-bottom: 3px;
}

.right-rows {
	width: 8px;
	margin: 0 6px 0 7px;
	display: flex;
	flex-direction: column;
	gap: 2px;
	overflow: hidden;
}

.right-rows i {
	height: 41px;
	flex: none;
	border-left: 1px solid #a8a8a8;
	border-radius: 5px 0 0 5px;
}

.right-scroll {
	flex: 1;
	display: flex;
	flex-direction: column;
	background: #e2e2e2;
}

.right-scroll .thumb {
	height: 516px;
}

/* Status Bar */
.status {
	height: 30px;
	flex: none;
	display: flex;
	align-items: center;
	padding-left: 2px;
	border-top: 2px solid #dcdbd8;
}

.more {
	width: 24px;
	height: 22px;
	margin-right: 7px;
	flex: none;
	border: none;
	border-right: 1px solid #888;
	border-bottom: 1px solid #888;
	background: #f1f0ee;
	color: #444;
	font-size: 12px;
}

.field {
	height: 23px;
	background: #f2f1ef;
	border-left: 1px solid #fff;
	border-bottom: 1px solid #666;
}

.field-main {
	width: 1099px;
	margin-right: 7px;
}

.field-end {
	flex: 1;
}
```
